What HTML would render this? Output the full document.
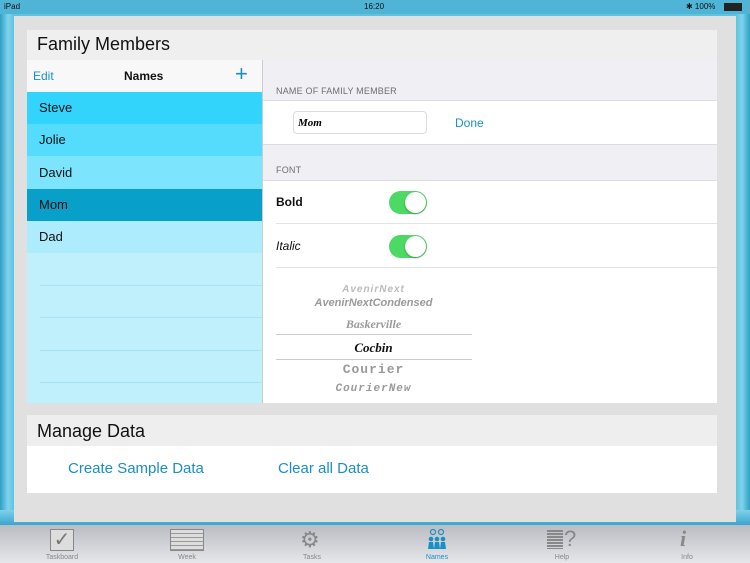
<!DOCTYPE html><html><head><style>
*{margin:0;padding:0;box-sizing:border-box}
body{width:750px;height:563px;overflow:hidden;position:relative;font-family:"Liberation Sans",sans-serif;background:#5bbfdd}
.a{position:absolute}
.frame{left:0;top:14px;width:750px;height:511px;background:linear-gradient(90deg,#2f9fc7 0,#7fd3ec 8px,#5fc3e0 14px,#5fc3e0 736px,#7fd3ec 742px,#2f9fc7 750px)}
.gray{left:14px;top:16px;width:722px;height:506px;background:#e0e0e0}
.row{left:27px;width:235px;height:32px;font-size:13px;line-height:32px;padding-left:12px;color:#111}
.sep{left:40px;width:222px;height:1px;background:#a7e3f4}
.lbl{font-size:9px;color:#6d6d72;letter-spacing:.2px}
.tog{width:38px;height:23px;border-radius:12px;background:#4cd964}
.tog i{position:absolute;right:1px;top:1px;width:21px;height:21px;border-radius:50%;background:#fff;box-shadow:0 1px 2px rgba(0,0,0,.3)}
.pk{left:276px;width:195px;text-align:center;font-family:"Liberation Serif",serif;font-style:italic;font-weight:bold;color:#9a9a9a}
.tab{top:527px;width:80px;text-align:center;font-size:7px;color:#888}
</style></head><body>
<div class="a" style="left:0;top:0;width:750px;height:14px;background:#4fb4d6;font-size:8px;color:#111">
<span class="a" style="left:4px;top:2px">iPad</span><span class="a" style="left:364px;top:2px">16:20</span><span class="a" style="left:686px;top:2px">✱ 100%</span><span class="a" style="left:724px;top:3px;width:18px;height:8px;border:1px solid #222;background:#222"></span></div>
<div class="a frame"></div>
<div class="a" style="left:0;top:510px;width:750px;height:15px;background:linear-gradient(#7fd0ea,#3aa6cc)"></div>
<div class="a gray"></div>
<div class="a" style="left:27px;top:30px;width:690px;height:30px;background:#efefef"></div>
<div class="a" style="left:37px;top:34px;font-size:18px;color:#111">Family Members</div>
<div class="a" style="left:27px;top:60px;width:235px;height:32px;background:#f8f8f8"></div>
<div class="a" style="left:33px;top:69px;font-size:12px;color:#1a8fc6">Edit</div>
<div class="a" style="left:124px;top:69px;font-size:12px;font-weight:bold;color:#111">Names</div>
<div class="a" style="left:235px;top:61px;font-size:22px;font-weight:300;color:#1a8fc6;line-height:26px">+</div>
<div class="a" style="left:27px;top:92px;width:235px;height:311px;background:#c1f0fd"></div>
<div class="a row" style="top:92px;background:#33d4fc">Steve</div>
<div class="a row" style="top:124px;background:#55dbfc">Jolie</div>
<div class="a row" style="top:156px;background:#7ce4fd;height:33px;line-height:33px">David</div>
<div class="a row" style="top:189px;background:#08a0c9">Mom</div>
<div class="a row" style="top:221px;background:#adecfc">Dad</div>
<div class="a sep" style="top:285px"></div><div class="a sep" style="top:317px"></div><div class="a sep" style="top:350px"></div><div class="a sep" style="top:382px"></div>
<div class="a" style="left:262px;top:60px;width:455px;height:343px;background:#fff;border-left:1px solid #ccc"></div>
<div class="a" style="left:263px;top:60px;width:454px;height:41px;background:#efeff4;border-bottom:1px solid #ddd"></div>
<div class="a lbl" style="left:276px;top:86px">NAME OF FAMILY MEMBER</div>
<div class="a" style="left:293px;top:111px;width:134px;height:23px;border:1px solid #ddd;border-radius:4px;font-family:'Liberation Serif',serif;font-style:italic;font-weight:bold;font-size:11px;padding:5px 4px">Mom</div>
<div class="a" style="left:455px;top:116px;font-size:12px;color:#1a8fc6">Done</div>
<div class="a" style="left:263px;top:144px;width:454px;height:37px;background:#efeff4;border-top:1px solid #ddd;border-bottom:1px solid #ddd"></div>
<div class="a lbl" style="left:276px;top:165px">FONT</div>
<div class="a" style="left:276px;top:195px;font-size:12px;font-weight:bold;color:#111">Bold</div>
<div class="a tog" style="left:389px;top:191px"><i></i></div>
<div class="a" style="left:276px;top:223px;width:441px;height:1px;background:#e3e3e3"></div>
<div class="a" style="left:276px;top:239px;font-size:12px;font-style:italic;color:#111">Italic</div>
<div class="a tog" style="left:389px;top:235px"><i></i></div>
<div class="a" style="left:276px;top:267px;width:441px;height:1px;background:#e3e3e3"></div>
<div class="a pk" style="top:284px;font-size:10px;color:#bbb;letter-spacing:1px;font-family:'Liberation Sans',sans-serif">AvenirNext</div>
<div class="a pk" style="top:297px;font-size:11px;font-family:'Liberation Sans',sans-serif">AvenirNextCondensed</div>
<div class="a pk" style="top:317px;font-size:12px">Baskerville</div>
<div class="a" style="left:276px;top:334px;width:196px;height:1px;background:#ccc"></div>
<div class="a pk" style="top:340px;font-size:13px;color:#111">Cocbin</div>
<div class="a" style="left:276px;top:359px;width:196px;height:1px;background:#ccc"></div>
<div class="a pk" style="top:362px;font-size:13px;font-family:'Liberation Mono',monospace;font-style:normal;letter-spacing:1px">Courier</div>
<div class="a pk" style="top:383px;font-size:11px;font-family:'Liberation Mono',monospace;letter-spacing:1px">CourierNew</div>
<div class="a" style="left:27px;top:415px;width:690px;height:31px;background:#eeeeee"></div>
<div class="a" style="left:37px;top:421px;font-size:18px;color:#111">Manage Data</div>
<div class="a" style="left:27px;top:446px;width:690px;height:47px;background:#fff"></div>
<div class="a" style="left:68px;top:460px;font-size:15px;color:#1a8fc6">Create Sample Data</div>
<div class="a" style="left:278px;top:460px;font-size:15px;color:#1a8fc6">Clear all Data</div>
<div class="a" style="left:0;top:525px;width:750px;height:38px;background:linear-gradient(#b9bcc2,#e6e7ea)"></div>
<div class="a" style="left:50px;top:529px;width:24px;height:22px;border:1px solid #888;background:#ddd;font-size:20px;line-height:20px;text-align:center;color:#777">✓</div>
<div class="a" style="left:170px;top:529px;width:34px;height:22px;border:1px solid #888;background:repeating-linear-gradient(#ddd 0 3px,#999 3px 4px)"></div>
<div class="a" style="left:300px;top:528px;font-size:22px;color:#888;line-height:24px">⚙</div>
<svg class="a" style="left:426px;top:528px" width="22" height="22" viewBox="0 0 22 22" fill="#1a8fc6"><circle cx="7" cy="4" r="2.5" fill="none" stroke="#1a8fc6" stroke-width="1.2"/><circle cx="15" cy="4" r="2.5" fill="none" stroke="#1a8fc6" stroke-width="1.2"/><circle cx="5" cy="11" r="2.3"/><circle cx="11" cy="11" r="2.3"/><circle cx="17" cy="11" r="2.3"/><path d="M2 21l1-7h4l1 7zM8 21l1-7h4l1 7zM14 21l1-7h4l1 7z"/></svg>
<div class="a" style="left:547px;top:530px;width:16px;height:19px;background:repeating-linear-gradient(#888 0 2px,transparent 2px 3px)"></div>
<div class="a" style="left:564px;top:527px;font-size:22px;color:#888;line-height:24px">?</div>
<div class="a" style="left:680px;top:527px;font-size:22px;font-family:'Liberation Serif',serif;font-style:italic;font-weight:bold;color:#888;line-height:24px">i</div>
<div class="a tab" style="left:22px;top:554px">Taskboard</div>
<div class="a tab" style="left:147px;top:554px">Week</div>
<div class="a tab" style="left:272px;top:554px">Tasks</div>
<div class="a tab" style="left:397px;top:554px;color:#1a8fc6">Names</div>
<div class="a tab" style="left:522px;top:554px">Help</div>
<div class="a tab" style="left:647px;top:554px">Info</div>
</body></html>
